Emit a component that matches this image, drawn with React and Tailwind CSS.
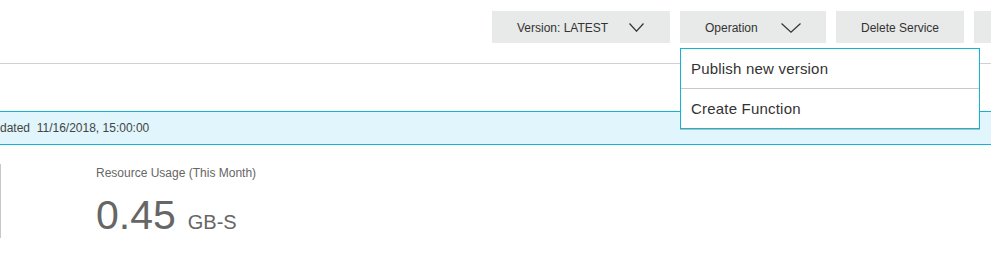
import { useState } from 'react'

function Chevron({ w, h }) {
  return (
    <svg width={w} height={h} viewBox={`0 0 ${w} ${h}`} fill="none" stroke="#333" strokeWidth="1.2">
      <path d={`M0.5 0.5 L${w / 2} ${h - 0.8} L${w - 0.5} 0.5`} />
    </svg>
  )
}

export default function App() {
  const [open] = useState(true)

  return (
    <div className="w-[991px] h-[258px] overflow-hidden bg-white text-[#333]" style={{ fontFamily: '"Liberation Sans", Arial, sans-serif' }}>
      <div className="relative z-10 h-[64px] border-b border-[#cfd2d4] pt-[11px] pl-[492px] flex gap-[10px] text-[12px]">
        <button className="shrink-0 w-[178px] h-[32px] bg-[#e8e9e9] flex items-center pl-[25px] pr-[26px] justify-between pt-px">
          <span>Version: LATEST</span>
          <Chevron w={15} h={9} />
        </button>
        <div className="relative shrink-0">
          <button className="w-[146px] h-[32px] bg-[#e8e9e9] flex items-center pl-[25px] pr-[25px] justify-between pt-px">
            <span>Operation</span>
            <Chevron w={20} h={10} />
          </button>
          {open && (
            <ul className="absolute left-0 top-[37px] w-[300px] bg-white border border-[#12b5d1] shadow-[0_1px_0_#bbb] text-[15px] tracking-[0.2px] text-[#333]">
              <li className="h-[40px] px-[10px] flex items-center border-b border-[#c8c8c8] pt-px">Publish new version</li>
              <li className="h-[39px] px-[10px] flex items-center pt-px">Create Function</li>
            </ul>
          )}
        </div>
        <button className="shrink-0 w-[128px] h-[32px] bg-[#e8e9e9] flex items-center justify-center pt-px">Delete Service</button>
        <button className="shrink-0 w-[100px] h-[32px] bg-[#e8e9e9]"></button>
      </div>

      <div className="mt-[47px] h-[34px] border-y border-[#12b5d1] bg-[#e0f6fc] flex items-center text-[12px] text-[#444] whitespace-pre">
        dated  11/16/2018, 15:00:00
      </div>

      <div className="mt-[19px] flex">
        <div className="w-px h-[74px] bg-[#c8c8c8]"></div>
        <div className="pl-[95px] pt-[2px] text-[#666]">
          <p className="text-[12px] leading-[14px]">Resource Usage (This Month)</p>
          <p className="mt-[15px] flex items-baseline leading-none">
            <span className="text-[41px] text-[#666]">0.45</span>
            <span className="ml-[12px] text-[20px] text-[#666]">GB-S</span>
          </p>
        </div>
      </div>
    </div>
  )
}
